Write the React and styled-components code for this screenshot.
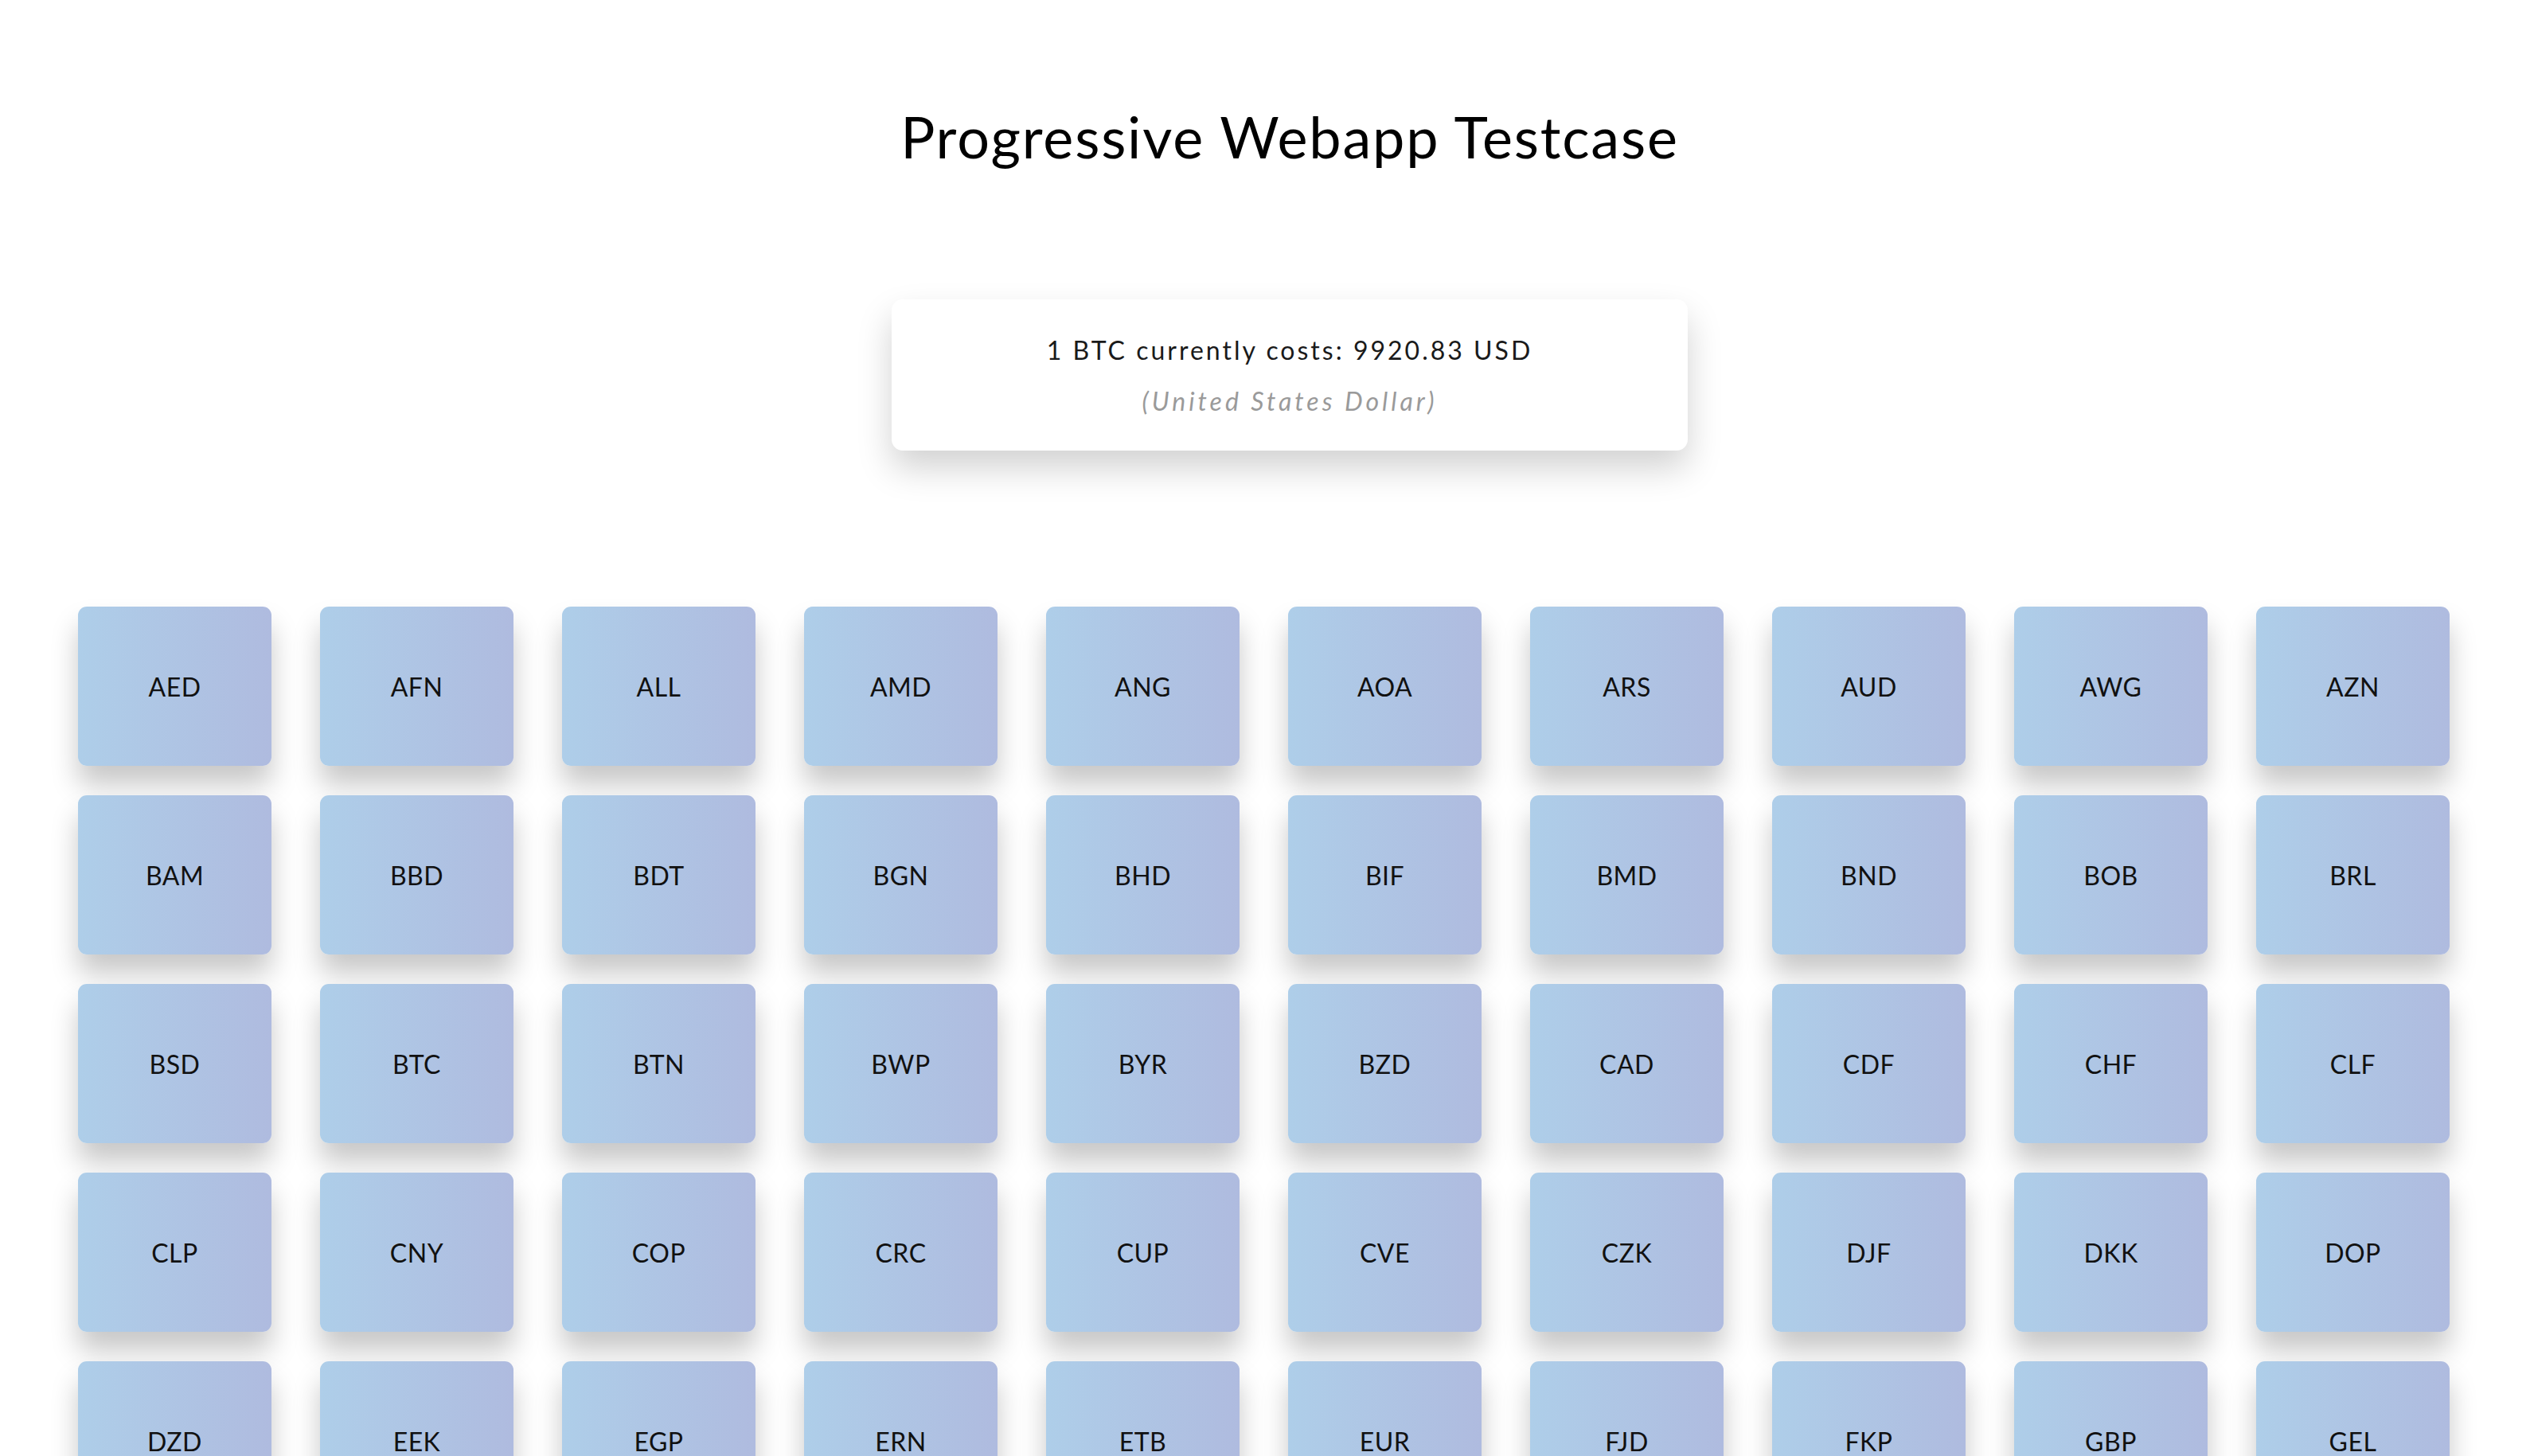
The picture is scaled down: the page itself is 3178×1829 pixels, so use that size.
import React from "react"
import styled, { createGlobalStyle } from "styled-components"

const currencies = [
  "AED", "AFN", "ALL", "AMD", "ANG", "AOA", "ARS", "AUD", "AWG", "AZN",
  "BAM", "BBD", "BDT", "BGN", "BHD", "BIF", "BMD", "BND", "BOB", "BRL",
  "BSD", "BTC", "BTN", "BWP", "BYR", "BZD", "CAD", "CDF", "CHF", "CLF",
  "CLP", "CNY", "COP", "CRC", "CUP", "CVE", "CZK", "DJF", "DKK", "DOP",
  "DZD", "EEK", "EGP", "ERN", "ETB", "EUR", "FJD", "FKP", "GBP", "GEL",
]

function App() {
  return (
    <>
      <GlobalStyle />
      <Page>
        <Header>
          <Title>Progressive Webapp Testcase</Title>
          <PriceCard>
            <Price>1 BTC currently costs: 9920.83 USD</Price>
            <CurrencyName>(United States Dollar)</CurrencyName>
          </PriceCard>
        </Header>
        <Grid>
          {currencies.map(code => (
            <Tile key={code}>{code}</Tile>
          ))}
        </Grid>
      </Page>
    </>
  )
}

export default App

const GlobalStyle = createGlobalStyle`
  html, body {
    margin: 0;
    padding: 0;
    background: #ffffff;
    font-family: Lato, "Open Sans", sans-serif;
    color: #111;
  }
`
const Page = styled.div`
  width: 100%;
  padding-bottom: 60px;
`
const Header = styled.header`
  display: flex;
  flex-direction: column;
  align-items: center;
  padding-top: 128px;
  padding-left: 62px;
`
const Title = styled.h1`
  margin: 0;
  font-size: 72px;
  font-weight: 400;
  line-height: 1.2;
  color: #000;
  letter-spacing: 1.8px;
`
const PriceCard = styled.div`
  margin-top: 162px;
  width: 1000px;
  box-sizing: border-box;
  padding: 32px 0 30px;
  background: #fff;
  border-radius: 14px;
  box-shadow: 0 22px 44px rgba(0, 0, 0, 0.18);
  text-align: center;
`
const Price = styled.p`
  margin: 0;
  font-size: 32px;
  line-height: 64px;
  color: #1a1a1a;
  letter-spacing: 3px;
`
const CurrencyName = styled.p`
  margin: 0;
  font-size: 32px;
  line-height: 64px;
  font-style: italic;
  color: #9a9a9a;
  letter-spacing: 4px;
`
const Grid = styled.div`
  margin-top: 196px;
  padding-right: 3px;
  display: grid;
  grid-template-columns: repeat(10, 243px);
  column-gap: 61px;
  row-gap: 37px;
  justify-content: center;
`
const Tile = styled.div`
  height: 200px;
  display: flex;
  align-items: center;
  justify-content: center;
  border-radius: 11px;
  background: linear-gradient(to right, #aecee9, #afbbdf);
  box-shadow: 0 24px 34px rgba(0, 0, 0, 0.22);
  font-size: 32px;
  letter-spacing: 0.5px;
  color: #111;
`
